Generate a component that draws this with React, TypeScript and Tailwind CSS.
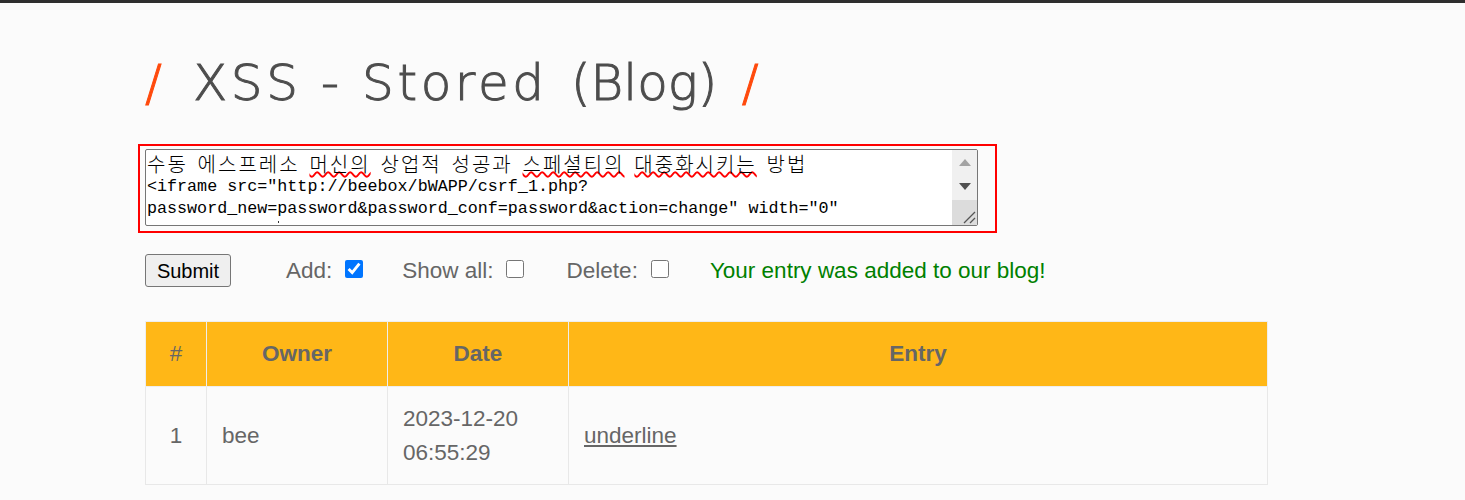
export default function App() {
  const wavy = "underline decoration-wavy decoration-[#ff0000] decoration-[1.5px] [text-underline-offset:-1px]";
  return (
    <div className="h-[500px] overflow-hidden border-t-[3px] border-[#2e2e2e] bg-[#fbfbfb] pl-[145px] pr-[197px] text-[22.5px] text-[#666666] [font-family:'Liberation_Sans',Arial,sans-serif]">
      <h1 className="mt-[42px] h-[84px] text-[50px] leading-[76px] font-extralight tracking-[3.6px] whitespace-nowrap text-[#4d4d4d] [-webkit-text-stroke:1px_currentColor] [font-family:'DejaVu_Sans','Noto_Sans',sans-serif]">
        <span className="text-[#ff4a0d]">/</span> <span className="ml-[8px]">XSS - Stored</span> <span className="ml-[4px] tracking-[0px]">(Blog)</span> <span className="ml-[5px] text-[#ff4a0d]">/</span>
      </h1>
      <div className="-ml-[7px] mt-[15px] h-[89px] w-[859px] border-2 border-[#ff0000] pl-[5px] pt-[3px]">
        <div className="flex h-[77px] w-[833px] overflow-hidden rounded-[2px] border border-[#767676] bg-white">
          <div className="h-full flex-1 pl-[1px] pt-[3px] text-[16.72px] leading-[22.5px] whitespace-nowrap text-black [font-family:'Liberation_Mono','Noto_Sans_CJK_KR',monospace]">
            <div className="text-[20px] font-light tracking-[2px] [word-spacing:3.4px] [font-family:'Noto_Sans_CJK_KR',sans-serif]">
              수동 에스프레소 <span className={wavy}>머신의</span> 상업적 성공과 <span className={wavy}>스페셜티의</span> <span className={wavy}>대중화시키는</span> 방법
            </div>
            <div>&lt;iframe src="http://beebox/bWAPP/csrf_1.php?</div>
            <div>password_new=password&amp;password_conf=password&amp;action=change" width="0"</div>
            <div className="ml-[131px] h-[2px] w-px bg-[#333333]" />
          </div>
          <div className="flex h-full w-[25px] flex-col bg-[#f0f0f0]">
            <div className="flex h-[50px] flex-col items-center justify-between pb-[10px] pt-[9px]">
              <svg width="12" height="7" viewBox="0 0 12 7"><path d="M6 0 12 7H0z" fill="#a3a3a3" /></svg>
              <svg width="12" height="7" viewBox="0 0 12 7"><path d="M0 0H12L6 7z" fill="#505050" /></svg>
            </div>
            <div className="flex flex-1 items-end justify-end bg-[#dcdcdc]">
              <svg width="16" height="16" viewBox="0 0 16 16" stroke="#555555" strokeWidth="1.3" fill="none">
                <path d="M3 14 14 3M9 14 14 9" />
              </svg>
            </div>
          </div>
        </div>
      </div>
      <div className="mt-[21px] flex h-[33px] items-center">
        <button className="h-[33px] w-[86px] rounded-[3px] border border-[#767676] bg-[#efefef] text-[20px] text-black">Submit</button>
        <span className="ml-[55px]">Add:</span>
        <input type="checkbox" defaultChecked className="ml-[13px] mb-[3px] h-[18px] w-[18px]" />
        <span className="ml-[39px]">Show all:</span>
        <input type="checkbox" className="ml-[12px] mb-[3px] h-[18px] w-[18px]" />
        <span className="ml-[43px]">Delete:</span>
        <input type="checkbox" className="ml-[13px] mb-[3px] h-[18px] w-[18px]" />
        <span className="ml-[41px] text-[#008000]">Your entry was added to our blog!</span>
      </div>
      <table className="mt-[34px] w-[1123px] table-fixed border-collapse">
        <thead>
          <tr className="h-[65px] bg-[#ffb717]">
            <th className="w-[61px] border border-[#eeeeee] font-normal">#</th>
            <th className="w-[181px] border border-[#eeeeee]">Owner</th>
            <th className="w-[181px] border border-[#eeeeee]">Date</th>
            <th className="border border-[#eeeeee]">Entry</th>
          </tr>
        </thead>
        <tbody>
          <tr className="h-[98px]">
            <td className="border border-[#e8e8e8] text-center">1</td>
            <td className="border border-[#e8e8e8] pl-[15px]">bee</td>
            <td className="border border-[#e8e8e8] pl-[15px] leading-[34px]">2023-12-20<br />06:55:29</td>
            <td className="border border-[#e8e8e8] pl-[15px]"><a href="#" className="underline">underline</a></td>
          </tr>
        </tbody>
      </table>
    </div>
  );
}
